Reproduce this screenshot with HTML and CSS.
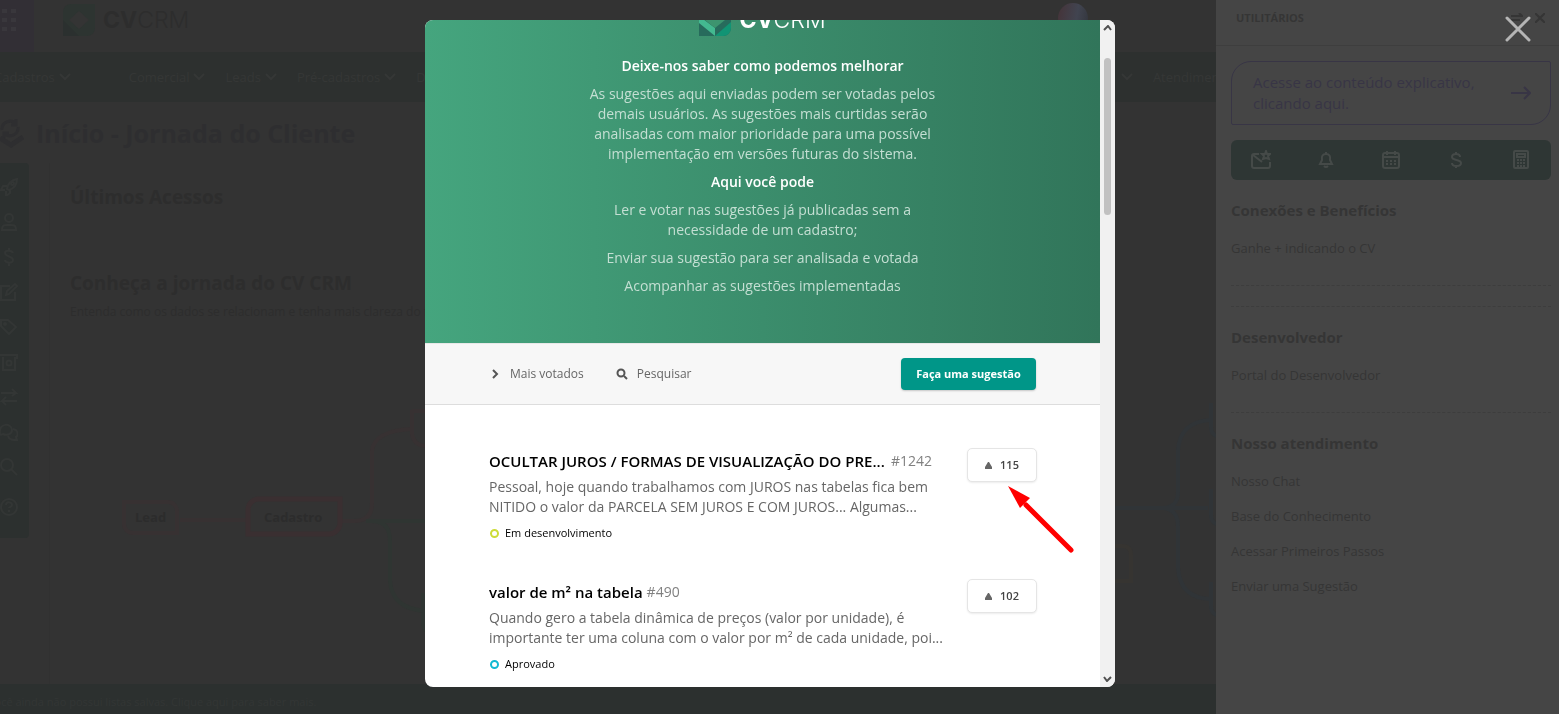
FILE: index.html
```html
<!DOCTYPE html>
<html lang="pt-BR">
<head>
  <meta charset="UTF-8" />
  <meta name="viewport" content="width=device-width, initial-scale=1.0"/>
  <title>CVCRM</title>
  <link rel="stylesheet" href="styles.css">
</head>
<body>
  <div class="page">
    <main class="main">
      <header class="topbar">
        <button class="apps" aria-label="Aplicativos">
          <svg width="16" height="24" viewBox="0 0 16 24" fill="currentColor">
            <path d="M2 1h5v4H2zM11 1h5v4h-5zM2 10h5v4H2zM11 10h5v4h-5zM2 19h5v4H2zM11 19h5v4h-5z"/>
          </svg>
        </button>
        <div class="brand brand-dim">
          <svg width="32" height="32" viewBox="0 0 32 32">
            <path d="M8 0h24v24a8 8 0 0 1-8 8H0V8a8 8 0 0 1 8-8z" fill="#2d3431"/>
            <path d="M0 16l16 16H0z" fill="#2b302f"/>
            <path d="M16 7l10 9-10 9-10-9z" fill="#343434"/>
          </svg>
          <span class="brand-name"><b>CV</b>CRM</span>
        </div>
        <span class="avatar"></span>
      </header>

      <nav class="nav">
        <a href="#" class="nav-link nav-first">Cadastros <svg class="chevron" viewBox="0 0 12 8"><path d="M1 1l5 5 5-5"/></svg></a>
        <a href="#" class="nav-link">Comercial <svg class="chevron" viewBox="0 0 12 8"><path d="M1 1l5 5 5-5"/></svg></a>
        <a href="#" class="nav-link">Leads <svg class="chevron" viewBox="0 0 12 8"><path d="M1 1l5 5 5-5"/></svg></a>
        <a href="#" class="nav-link">Pré-cadastros <svg class="chevron" viewBox="0 0 12 8"><path d="M1 1l5 5 5-5"/></svg></a>
        <a href="#" class="nav-link">Documentos</a>
        <svg class="chevron nav-more" viewBox="0 0 12 8"><path d="M1 1l5 5 5-5"/></svg>
        <a href="#" class="nav-link nav-last">Atendimento</a>
      </nav>

      <div class="title">
        <svg width="24" height="30" viewBox="0 0 24 30" fill="none" stroke="currentColor" stroke-width="3">
          <path d="M2 12a8 8 0 0 1 14-6M18 9a8 8 0 0 1-14 6M16 1v6h-5M4 20v-5h5"/>
          <path d="M0 20l11 7 12-8" stroke-width="5"/>
        </svg>
        <h1>Início - Jornada do Cliente</h1>
      </div>

      <div class="workspace">
        <div class="side-icons">
          <svg viewBox="0 0 18 18"><path d="M7 11C8 5 12 2 17 1c0 5-2 9-8 11zM7 8H3l-2 4h4M10 11v4l-4 3v-5"/><circle cx="12.500" cy="5.500" r="1.500"/></svg>
          <svg viewBox="0 0 18 18"><circle cx="9" cy="5" r="4"/><path d="M2 17c0-6 4-5 7-5s7-1 7 5z"/></svg>
          <svg viewBox="0 0 18 18"><path d="M13 5c-1-3-8-3-8 0 0 4 8 3 8 7 0 4-8 3-8 0M9 0v3M9 15v3"/></svg>
          <svg viewBox="0 0 18 18"><path d="M10 3H1v14h14V9M7 8l8-7 2 2-8 8-3 1z"/></svg>
          <svg viewBox="0 0 18 18"><path d="M1 2v6l8 8 7-7-8-7z"/><circle cx="5" cy="6" r="1"/></svg>
          <svg viewBox="0 0 18 18"><path d="M0 2h17v4M3 4v13h12V4"/><circle cx="9" cy="10" r="2.500"/></svg>
          <svg viewBox="0 0 18 18"><path d="M1 5h15l-4-4M16 5l-4 3M17 13H2l4-4M2 13l4 4"/></svg>
          <svg viewBox="0 0 18 18"><path d="M0 11c-2-12 12-11 12-4 0 4-5 6-9 4l-3 1M13 6c6 1 5 7 3 8l1 3c-4 0-8 0-9-4"/></svg>
          <svg viewBox="0 0 18 18"><circle cx="7" cy="7" r="6"/><path d="M11 11l6 6"/></svg>
          <svg class="side-help" viewBox="0 0 18 18"><circle cx="9" cy="9" r="8"/><path d="M6 7c0-4 6-3 6 0 0 2-3 2-3 3M9 12v2"/></svg>
        </div>

        <div class="panel">
          <h2 class="panel-recent">Últimos Acessos</h2>
          <h2>Conheça a jornada do CV CRM</h2>
          <p>Entenda como os dados se relacionam e tenha mais clareza do funcionamento</p>
          <svg class="journey" viewBox="50 330 1166 354" preserveAspectRatio="xMinYMin slice" fill="none" stroke-width="4">
            <g stroke="#373132">
              <path d="M124 502h44a9 9 0 0 1 9 9v22h-44a9 9 0 0 1-9-9zM180 520h66"/>
              <path d="M342 521h12q18 0 18-18v-52q2-20 39-22"/>
              <path d="M412 410v24q2 12 14 12M412 411h14"/>
            </g>
            <path d="M258 499h82v24a11 11 0 0 1-11 11h-81v-24a11 11 0 0 1 10-11z" stroke="#3a2f31" stroke-width="5"/>
            <g stroke="#2f3532">
              <path d="M366 521h60M372 521q18 0 18 20v40q2 28 36 30M423 593v30q0 8 8 9"/>
            </g>
            <g stroke="#303437">
              <path d="M1110 508h98M1162 508q16 0 16-16v-42q2-28 32-30M1164 508q14 2 14 18v42q2 30 32 31"/>
              <path d="M1211 403v24q0 8 8 10M1211 489v26q0 8 8 10M1211 582v24q0 8 8 10"/>
            </g>
            <path d="M1110 546h12q9 0 9 9v26h-20" stroke="#363431"/>
            <text x="135" y="522" class="node-text">Lead</text>
            <text x="264" y="522" class="node-text">Cadastro</text>
          </svg>
        </div>
      </div>

      <footer class="footer"><a href="#">Você ainda não possui listas salvas. Clique aqui para saber mais.</a></footer>
    </main>

    <aside class="utilities">
      <div class="util-head">
        <h3>UTILITÁRIOS</h3>
        <svg width="12" height="10" viewBox="0 0 12 10"><path d="M0 3h11L8 0M0 7h9"/></svg>
        <svg width="10" height="10" viewBox="0 0 10 10"><path d="M0 0l10 10M10 0L0 10"/></svg>
      </div>
      <div class="util-body">
        <a href="#" class="help-box">
          <span>Acesse ao conteúdo explicativo,<br>clicando aqui.</span>
          <svg width="20" height="14" viewBox="0 0 20 14"><path d="M0 7h19M13 1l6 6-6 6"/></svg>
        </a>
        <div class="tools">
          <svg viewBox="0 0 20 20"><path d="M8 4H3q-2 0-2 2v10q0 2 2 2h14q2 0 2-2v-4M2 5l9 7M15 1l1 3 3 0-2 2 1 3-3-1-3 1 1-3-2-2 3 0z"/></svg>
          <svg viewBox="0 0 20 20"><path d="M10 2v2M4 14h12M4 14l2-4q-1-6 4-6t4 6l2 4zM8 16q2 2 4 0"/></svg>
          <svg viewBox="0 0 20 20"><path d="M4 3h12q2 0 2 2v11q0 2-2 2H4q-2 0-2-2V5q0-2 2-2zM2 7h16M6 1v4M14 1v4"/><path d="M5 11h10M5 14h10" stroke-dasharray="2 2"/></svg>
          <svg viewBox="0 0 20 20"><path d="M14 7c0-4-8-4-8 0 0 4 9 2 9 6 0 4-9 4-9 0M10 2v3M10 15v3"/></svg>
          <svg viewBox="0 0 20 20"><path d="M4 1h12q1 0 1 1v15q0 1-1 1H4q-1 0-1-1V2q0-1 1-1zM6 4h8v3H6z"/><path d="M6 10h9M6 13h9M6 16h9" stroke-dasharray="2 1"/></svg>
        </div>
        <section class="util-section">
          <h3>Conexões e Benefícios</h3>
          <a href="#">Ganhe + indicando o CV</a>
        </section>
        <hr>
        <section class="util-section util-ruled">
          <h3>Desenvolvedor</h3>
          <a href="#">Portal do Desenvolvedor</a>
        </section>
        <section class="util-section util-ruled">
          <h3>Nosso atendimento</h3>
          <a href="#">Nosso Chat</a>
          <a href="#">Base do Conhecimento</a>
          <a href="#">Acessar Primeiros Passos</a>
          <a href="#">Enviar uma Sugestão</a>
        </section>
      </div>
    </aside>
  </div>

  <div class="overlay">
    <div class="modal" role="dialog" aria-label="Sugestões">
      <div class="frame">
        <div class="hero">
          <div class="brand brand-hero">
            <svg width="32" height="32" viewBox="0 0 32 32">
              <path d="M8 0h24v24a8 8 0 0 1-8 8H0V8a8 8 0 0 1 8-8z" fill="#276b5c"/>
              <path d="M0 12l16 12v8L0 19z" fill="#43b990"/>
              <path d="M32 18v6a8 8 0 0 1-8 8h-8z" fill="#119474"/>
              <path d="M16 7l10 9-10 8-10-8z" fill="#3d946f"/>
            </svg>
            <span class="brand-name"><b>CV</b>CRM</span>
          </div>
          <h4>Deixe-nos saber como podemos melhorar</h4>
          <p>As sugestões aqui enviadas podem ser votadas pelos<br>demais usuários. As sugestões mais curtidas serão<br>analisadas com maior prioridade para uma possível<br>implementação em versões futuras do sistema.</p>
          <h4>Aqui você pode</h4>
          <p>Ler e votar nas sugestões já publicadas sem a<br>necessidade de um cadastro;</p>
          <p>Enviar sua sugestão para ser analisada e votada</p>
          <p>Acompanhar as sugestões implementadas</p>
        </div>

        <div class="toolbar">
          <button class="tool-btn">
            <svg width="12" height="12" viewBox="0 0 12 12"><path d="M4 2l4 4-4 4"/></svg>Mais votados
          </button>
          <label class="search">
            <svg width="12" height="12" viewBox="0 0 12 12"><circle cx="5" cy="5" r="3.500"/><path d="M8 8l3 3"/></svg>
            <input type="text" placeholder="Pesquisar">
          </label>
          <button class="suggest-btn">Faça uma sugestão</button>
        </div>

        <div class="list">
          <article class="card">
            <div class="card-text">
              <div class="card-title"><h5>OCULTAR JUROS / FORMAS DE VISUALIZAÇÃO DO PRE...</h5><span class="ref ref-end">#1242</span></div>
              <p>Pessoal, hoje quando trabalhamos com JUROS nas tabelas fica bem<br>NITIDO o valor da PARCELA SEM JUROS E COM JUROS... Algumas...</p>
              <div class="status status-dev">Em desenvolvimento</div>
            </div>
            <button class="vote"><svg width="7" height="7" viewBox="0 0 7 7"><path d="M3 0h1l3 5v2H0V5z"/></svg>115</button>
          </article>
          <article class="card">
            <div class="card-text">
              <div class="card-title"><h5>valor de m² na tabela</h5><span class="ref">#490</span></div>
              <p>Quando gero a tabela dinâmica de preços (valor por unidade), é<br>importante ter uma coluna com o valor por m² de cada unidade, poi...</p>
              <div class="status status-ok">Aprovado</div>
            </div>
            <button class="vote"><svg width="7" height="7" viewBox="0 0 7 7"><path d="M3 0h1l3 5v2H0V5z"/></svg>102</button>
          </article>
        </div>

        <svg class="pointer" width="68" height="70" viewBox="0 0 68 70">
          <path d="M63 64L18 19" stroke="#f00" stroke-width="5" stroke-linecap="round"/>
          <path d="M0 0l22 12-10 10z" fill="#f00"/>
        </svg>
      </div>
      <div class="scrollbar">
        <svg width="9" height="6" viewBox="0 0 9 6"><path d="M1 5l4-4 3 4"/></svg>
        <span class="thumb"></span>
        <svg width="9" height="6" viewBox="0 0 9 6"><path d="M1 1l3 4 4-4"/></svg>
      </div>
    </div>
    <button class="close" aria-label="Fechar">
      <svg width="26" height="26" viewBox="0 0 26 26"><path d="M2 2l22 22M24 2L2 24"/></svg>
    </button>
  </div>
</body>
</html>
```
FILE: styles.css
```css
*, *::before {
  box-sizing: border-box;
}

body {
  margin: 0;
  font-family: "Open Sans", "Noto Sans", sans-serif;
  font-size: 14px;
  line-height: 20px;
  background: #333333;
  color: #2d2d2d;
}

h1, h2, h3, h4, h5, p {
  margin: 0;
}

a {
  color: inherit;
  text-decoration: none;
}

button, input {
  font: inherit;
  color: inherit;
  border: none;
  background: none;
  padding: 0;
}

button {
  cursor: pointer;
}

.page {
  display: flex;
  height: 100vh;
}

.main {
  flex: 1;
  min-width: 0;
  overflow: hidden;
  display: flex;
  flex-direction: column;
}

/* top bar */
.topbar {
  height: 52px;
  display: flex;
  flex-shrink: 0;
}

.apps {
  width: 34px;
  margin-right: 29px;
  padding-top: 8px;
  background: #322f35;
  color: #39373c;
  display: flex;
}

.brand {
  display: flex;
  gap: 8px;
}

.brand-dim {
  padding-top: 4px;
}

.brand-name {
  font-family: Inter, sans-serif;
  font-size: 23px;
  font-weight: 300;
  line-height: 32px;
}

.brand-name b {
  font-weight: 700;
}

.avatar {
  width: 30px;
  height: 30px;
  margin: 3px 128px 0 auto;
  border-radius: 50%;
  background: linear-gradient(100deg, #453338, #414450 60%, #32353c);
}

.nav {
  height: 50px;
  flex-shrink: 0;
  display: flex;
  align-items: center;
  gap: 20px;
  padding-left: 0;
  margin-left: -6px;
  background: #2d302f;
  color: #353736;
}

.nav-link {
  display: flex;
  align-items: center;
  gap: 4px;
  font-size: 13px;
}

.nav-first {
  margin-right: 38px;
}

.nav-more {
  margin-left: auto;
}

.nav-last {
  margin-right: -16px;
}

.chevron {
  width: 12px;
  height: 8px;
  fill: none;
  stroke: currentColor;
  stroke-width: 2;
}

.title {
  display: flex;
  align-items: center;
  gap: 12px;
  height: 61px;
  flex-shrink: 0;
  color: #2e2e30;
}

.title h1 {
  font-size: 25px;
  line-height: 32px;
}

.workspace {
  flex: 1;
  min-height: 0;
  display: flex;
  align-items: flex-start;
}

.side-icons {
  width: 29px;
  height: 375px;
  padding-top: 15px;
  display: flex;
  flex-direction: column;
  gap: 17px;
  border-radius: 0 4px 4px 0;
  background: #2c302f;
}

.side-icons svg {
  width: 18px;
  height: 18px;
  flex-shrink: 0;
  fill: none;
  stroke: #333635;
  stroke-width: 2;
}

.side-icons .side-help {
  margin-top: 5px;
}

.panel {
  flex: 1;
  height: 100%;
  margin-left: 20px;
  padding: 22px 0 0 20px;
  overflow: hidden;
  border-left: 1px solid #313131;
}

.panel h2 {
  font-size: 19px;
  line-height: 24px;
}

.panel .panel-recent {
  margin-bottom: 62px;
}

.panel p {
  margin-top: 7px;
  font-size: 12px;
  line-height: 20px;
  white-space: nowrap;
}

.journey {
  display: block;
  width: 1166px;
  height: 354px;
  margin: 8px 0 0 -20px;
}

.node-text {
  fill: #2c2c2c;
  stroke: none;
  font-size: 13px;
  font-weight: 700;
}

.footer {
  height: 30px;
  flex-shrink: 0;
  padding: 8px 0 8px 4px;
  margin-left: -16px;
  background: #2c302f;
  color: #333635;
  font-size: 11px;
}

/* utilities column */
.utilities {
  width: 343px;
  background: #454545;
  color: #353535;
}

.utilities svg {
  fill: none;
  stroke: currentColor;
}

.util-head {
  height: 46px;
  padding: 8px 14px 18px 20px;
  display: flex;
  align-items: center;
  gap: 12px;
  border-bottom: 1px solid #3e3e3e;
}

.util-head svg {
  stroke-width: 2;
}

.util-head h3 {
  flex: 1;
  font-size: 11px;
  line-height: 20px;
}

.util-body {
  padding: 15px 8px 0 15px;
}

.help-box {
  height: 64px;
  padding: 0 19px 0 21px;
  display: flex;
  align-items: center;
  justify-content: space-between;
  border: 1px solid #383545;
  border-radius: 20px 2px 20px 2px;
  color: #383545;
  font-size: 15px;
  line-height: 21px;
}

.help-box svg {
  stroke-width: 2;
}

.tools {
  height: 40px;
  margin: 15px 0 20px;
  padding: 0 20px;
  display: flex;
  align-items: center;
  justify-content: space-between;
  border-radius: 6px;
  background: #2e3634;
  color: #454a48;
}

.tools svg {
  width: 20px;
  height: 20px;
  stroke-width: 2;
}

.util-section {
  display: flex;
  flex-direction: column;
  gap: 15px;
  padding-bottom: 27px;
  font-size: 13px;
}

.util-section h3 {
  font-size: 15px;
  line-height: 20px;
  margin-bottom: 3px;
}

.util-body hr {
  margin: 0 0 20px;
  border: 0;
  border-top: 1px dashed #3d3d3d;
}

.util-ruled {
  padding-top: 20px;
  border-top: 1px dashed #3d3d3d;
}

/* suggestions modal */
.overlay {
  position: fixed;
  inset: 0;
  display: flex;
  justify-content: center;
  padding: 20px 19px 27px 0;
}

.modal {
  width: 690px;
  display: flex;
  overflow: hidden;
  border-radius: 8px;
  background: #ffffff;
}

.frame {
  position: relative;
  flex: 1;
  overflow: hidden;
}

.hero {
  display: flex;
  flex-direction: column;
  align-items: center;
  gap: 8px;
  padding-bottom: 47px;
  text-align: center;
  color: #c4dfd3;
  background: linear-gradient(90deg, #45a57e, #31755a);
}

.hero h4 {
  color: #ffffff;
  font-size: 14px;
  font-weight: 600;
  line-height: 20px;
}

.brand-hero {
  margin: -16px 0 12px;
  color: #ffffff;
}

.toolbar {
  height: 62px;
  padding: 0 64px;
  display: flex;
  align-items: center;
  gap: 32px;
  background: #f7f7f7;
  border-top: 1px solid #e8e8e8;
  border-bottom: 1px solid #dddddd;
  color: #666666;
  font-size: 12px;
}

.toolbar svg {
  fill: none;
  stroke: #555555;
  stroke-width: 2;
}

.tool-btn, .search {
  display: flex;
  align-items: center;
  gap: 9px;
}

.search input {
  width: 100px;
  outline: none;
}

.search input::placeholder {
  color: #666666;
  opacity: 1;
}

.suggest-btn {
  width: 135px;
  height: 32px;
  margin-left: auto;
  border-radius: 4px;
  background: #009688;
  color: #ffffff;
  font-size: 11px;
  font-weight: 700;
  box-shadow: 0 1px 2px rgba(0, 0, 0, 0.2);
}

.list {
  padding: 43px 63px 0 64px;
}

.card {
  display: flex;
  justify-content: space-between;
  align-items: flex-start;
  height: 131px;
}

.card-text {
  width: 443px;
  padding-top: 3px;
  white-space: nowrap;
}

.card-title {
  display: flex;
  gap: 4px;
  margin-bottom: 6px;
}

.card h5 {
  color: #000000;
  font-size: 15px;
  font-weight: 600;
}

.ref {
  color: #808080;
}

.ref-end {
  margin-left: auto;
}

.card p {
  color: #666666;
}

.status {
  display: flex;
  align-items: center;
  gap: 6px;
  margin-top: 6px;
  padding-left: 1px;
  color: #000000;
  font-size: 11px;
}

.status::before {
  content: "";
  width: 9px;
  height: 9px;
  border: 2px solid #cddc39;
  border-radius: 50%;
}

.status-ok::before {
  border-color: #12b9d2;
}

.vote {
  width: 70px;
  height: 34px;
  display: flex;
  align-items: center;
  justify-content: center;
  gap: 8px;
  border: 1px solid #e5e5e5;
  border-radius: 5px;
  background: #ffffff;
  color: #444444;
  font-size: 11px;
  font-weight: 600;
  box-shadow: 0 1px 2px rgba(0, 0, 0, 0.08);
}

.vote svg {
  fill: #666666;
}

/* arrow drawn over the first vote button */
.pointer {
  position: absolute;
  left: 583px;
  top: 466px;
}

.scrollbar {
  width: 15px;
  padding: 5px 0;
  display: flex;
  flex-direction: column;
  align-items: center;
  background: #f1f1f1;
}

.scrollbar svg {
  fill: none;
  stroke: #505050;
  stroke-width: 2;
}

.thumb {
  width: 7px;
  height: 157px;
  margin: 27px 0 auto;
  border-radius: 4px;
  background: #c1c1c1;
}

.close {
  position: absolute;
  top: 16px;
  right: 28px;
  height: 26px;
}

.close svg {
  display: block;
  stroke: #b5b5b5;
  stroke-width: 3;
  stroke-linecap: round;
}
```
